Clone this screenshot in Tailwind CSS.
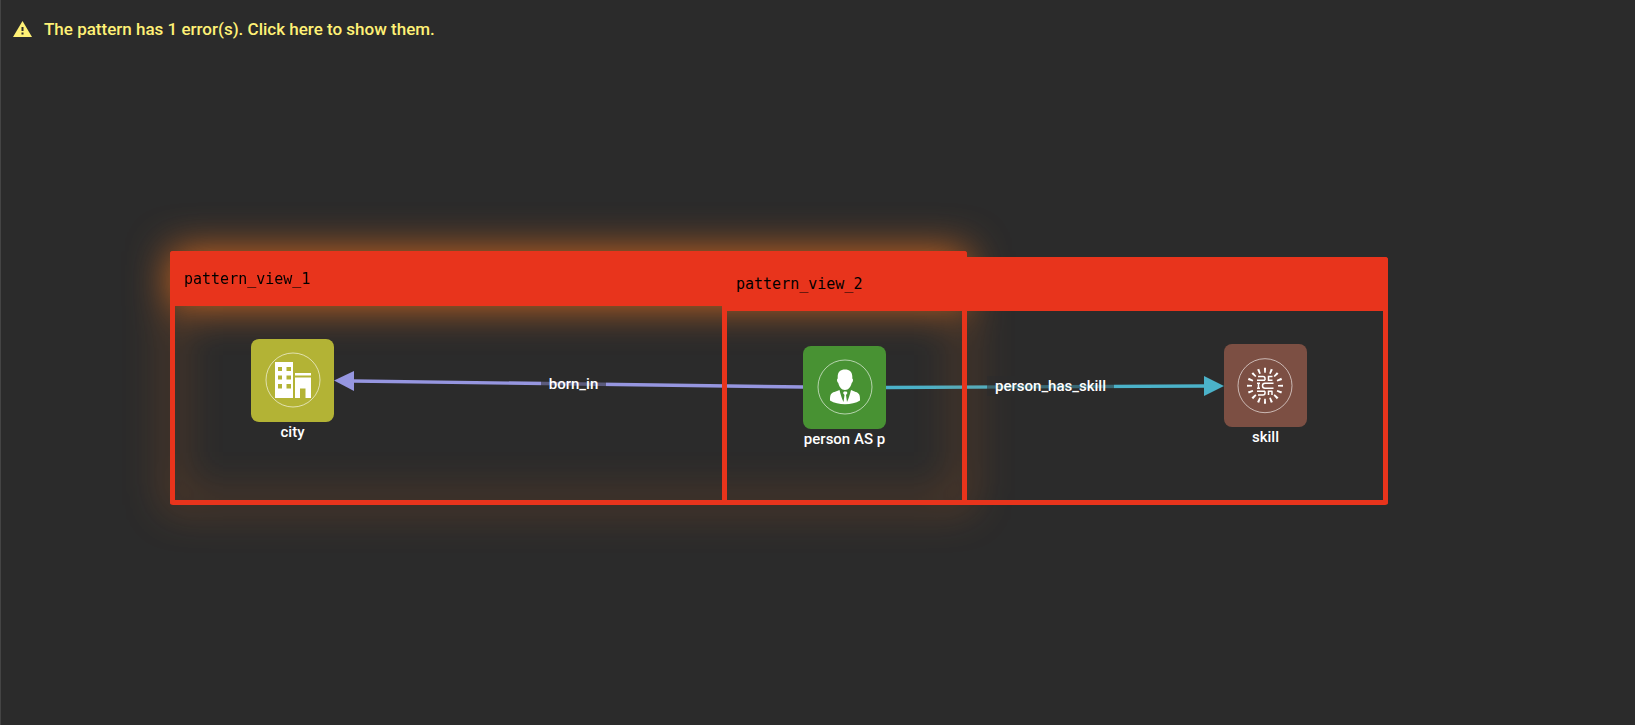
<!DOCTYPE html>
<html lang="en">
<head>
<meta charset="utf-8">
<meta name="viewport" content="width=device-width, initial-scale=1">
<title>Pattern editor</title>
<script src="https://cdn.jsdelivr.net/npm/@tailwindcss/browser@4"></script>
</head>
<body class="flex min-h-screen flex-col border-l border-[#444444] bg-[#2b2b2b] font-['Roboto',sans-serif] text-white">
  <main class="relative flex-1 overflow-hidden">
    <!-- Edges -->
    <svg class="absolute top-0 left-0 size-full" fill="none" stroke-width="3.4" aria-hidden="true">
      <path d="M352 381 803 387" stroke="#9696e0"/>
      <path d="M333 380.500 353 371v20z" fill="#9696e0"/>
      <path d="M884 387.500 1205 386" stroke="#4bb2c9"/>
      <path d="M1223 386 1203 376v20z" fill="#4bb2c9"/>
    </svg>
    <span class="absolute top-[374px] left-[540px] w-[65px] bg-[#2b2b2b]/55 text-center text-[15px] leading-5 font-medium">born_in</span>

    <!-- Views -->
    <section class="absolute top-[251px] left-[169px] h-[254px] w-[797px] rounded-[3px] border-[5px] border-t-0 border-[#e8341c] drop-shadow-[0_0_20px_#d5691f]">
      <h2 class="-mx-[5px] h-[55px] rounded-t-[3px] bg-[#e8341c] px-[14px] pt-[18px] font-['DejaVu_Sans_Mono',monospace] text-[15px] leading-5 text-black">pattern_view_1</h2>
    </section>
    <section class="absolute top-[257px] left-[721px] h-[248px] w-[666px] rounded-[3px] border-[5px] border-t-0 border-[#e8341c]">
      <h2 class="-mx-[5px] h-[54px] rounded-t-[3px] bg-[#e8341c] px-[14px] pt-[17px] font-['DejaVu_Sans_Mono',monospace] text-[15px] leading-5 text-black">pattern_view_2</h2>
    </section>
    <span class="absolute top-[376px] left-[986px] w-[127px] bg-[#2b2b2b]/55 text-center text-[15px] leading-5 font-medium">person_has_skill</span>

    <!-- Nodes -->
    <figure class="absolute top-[339px] left-[250px] flex w-[83px] flex-col items-center">
      <svg class="size-[83px] rounded-lg bg-[#b3b335]" viewBox="0 0 83 83" fill="#fff" aria-hidden="true">
        <circle cx="42" cy="41" r="27" fill="none" stroke="#fff" stroke-opacity=".6"/>
        <path fill-rule="evenodd" d="M24 23h18v36H24zM27 28v4h4v-4zm8.500 0v4h4.500v-4zM27 36.500v4h4v-4zm8.500 0v4h4.500v-4zM27 45v4.500h4V45zm8.500 0v4.500h4.500V45z"/>
        <path d="M44 34h16v2.500H44zM44 38.500h16V59h-5.500V49.500H49V59h-5z"/>
      </svg>
      <figcaption class="text-[15px] leading-5 font-medium">city</figcaption>
    </figure>
    <figure class="absolute top-[346px] left-[802px] flex w-[83px] flex-col items-center">
      <svg class="size-[83px] rounded-lg bg-[#489233]" viewBox="0 0 83 83" fill="#fff" aria-hidden="true">
        <circle cx="42" cy="41" r="27" fill="none" stroke="#fff" stroke-opacity=".6"/>
        <path d="M42 23.500c4.500 0 7.300 2.500 7.300 7v2c1.200.5.800 3.500-.6 4.500-.7 3.500-3 7-6.700 7s-6-3.500-6.700-7c-1.400-1-1.800-4-.6-4.500v-2c0-4.500 2.800-7 7.300-7z"/>
        <path d="M36.500 44c1 4.500 2.500 9 4 12l1-7-1.500-2 1-1.500h2.500l1 1.500-1.500 2 1 7c1.500-3 3-7.500 4-12 3 1.500 7 2 8.200 4.500.8 1.600.8 4 .8 6-8 5-22 5-30 0 0-2 0-4.400.8-6 1.200-2.500 5.700-3 8.700-4.500z"/>
      </svg>
      <figcaption class="text-[15px] leading-5 font-medium whitespace-nowrap">person AS p</figcaption>
    </figure>
    <figure class="absolute top-[344px] left-[1223px] flex w-[83px] flex-col items-center">
      <svg class="size-[83px] rounded-lg bg-[#7c4f43]" viewBox="0 0 83 83" fill="none" stroke="#fff" aria-hidden="true">
        <circle cx="41" cy="41.700" r="27" stroke-opacity=".6"/>
        <circle cx="41" cy="41.700" r="15.500" stroke-width="5" pathLength="160" stroke-dasharray="3.200 6.800" stroke-dashoffset="1.600"/>
        <path stroke-width="1.500" d="M34 32.500h5q2 0 2 2v1.800M33 36.300h8M48.500 32.500h-4v3.800h4M33 39.300h3M33 44.200h3M34.500 39.300v5M49.500 39.300H41q-2.500 0-2.500 2.450T41 44.200h8.500M33 47.200h8M34 51h5q2 0 2-2v-1.800M48.500 47.200h-4V51M48 47.200V51"/>
      </svg>
      <figcaption class="text-[15px] leading-5 font-medium">skill</figcaption>
    </figure>

    <!-- Error notice -->
    <header class="relative flex px-3 pt-[17px]">
      <button type="button" class="flex cursor-pointer items-center gap-3 text-[17px] leading-6 font-medium text-[#fff176]">
        <svg class="h-4 w-[19px]" viewBox="0 0 19 16" aria-hidden="true">
          <path d="M9.500 0 19 16H0z" fill="#fff176"/>
          <path d="M8.500 6h2v4h-2zM8.500 11.500h2v2h-2z" fill="#2b2b2b"/>
        </svg>
        <span>The pattern has 1 error(s). Click here to show them.</span>
      </button>
    </header>
  </main>
</body>
</html>
